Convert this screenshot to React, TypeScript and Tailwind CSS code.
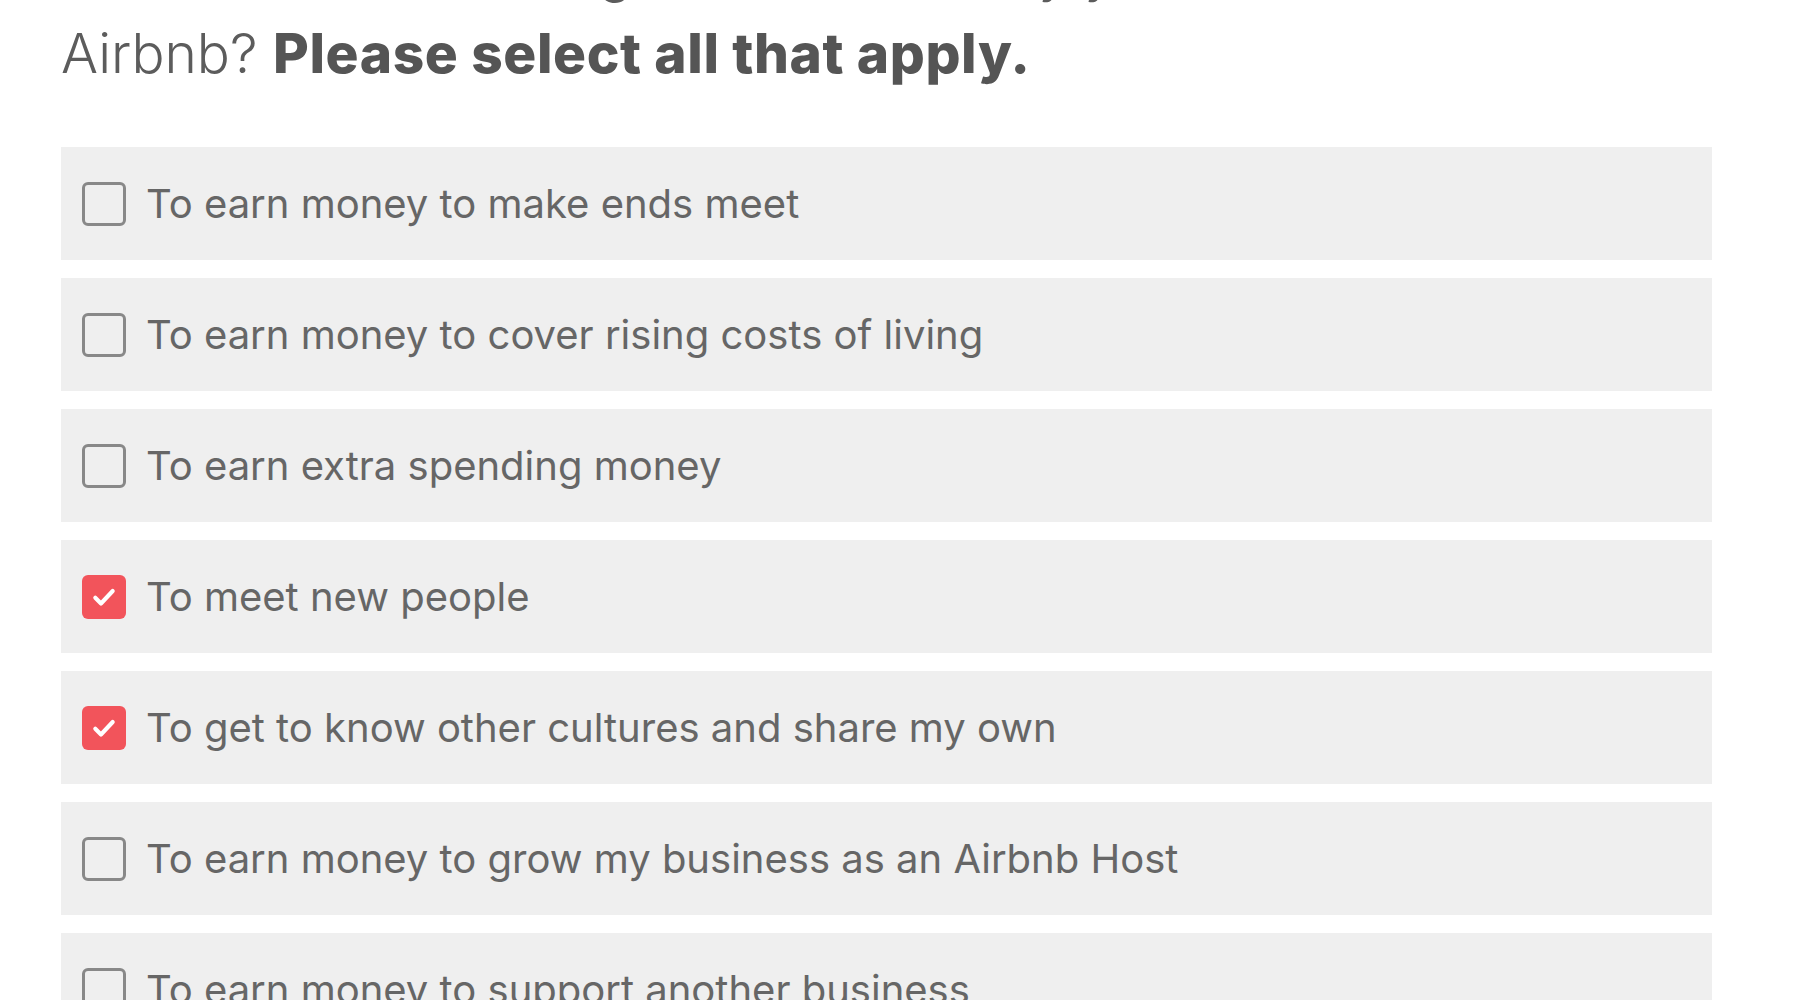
const options = [
  { label: "To earn money to make ends meet", checked: false },
  { label: "To earn money to cover rising costs of living", checked: false },
  { label: "To earn extra spending money", checked: false },
  { label: "To meet new people", checked: true },
  { label: "To get to know other cultures and share my own", checked: true },
  { label: "To earn money to grow my business as an Airbnb Host", checked: false },
  { label: "To earn money to support another business", checked: false },
];

function Box({ checked }: { checked: boolean }) {
  if (checked) {
    return (
      <span className="flex h-[44px] w-[44px] shrink-0 items-center justify-center rounded-[6px] bg-[#f2545b]">
        <svg viewBox="0 0 24 24" className="h-[38px] w-[38px]" fill="none">
          <path d="M6.5 12.5l3.6 3.6L17.5 8.2" stroke="white" strokeWidth="2.6" strokeLinecap="round" strokeLinejoin="round" />
        </svg>
      </span>
    );
  }
  return <span className="h-[44px] w-[44px] shrink-0 rounded-[6px] border-[3px] border-[#888]" />;
}

export default function App() {
  return (
    <div className="h-screen overflow-hidden bg-white px-[61px] font-['Inter',sans-serif] text-[#666]">
      <h1 className="-mt-[70px] whitespace-nowrap text-[55px] leading-[82px] font-light text-[#5c5c5c]">
        Which of the following are reasons why you host or want to host on
        <br />
        Airbnb? <span className="font-extrabold tracking-[0.6px] text-[#555]">Please select all that apply.</span>
      </h1>
      <div className="mt-[53px] flex w-[1651px] flex-col gap-[18px]">
        {options.map((o) => (
          <label key={o.label} className="flex h-[113px] items-center gap-[20px] bg-[#efefef] pl-[21px]">
            <Box checked={o.checked} />
            <span className="text-[40px] leading-none">{o.label}</span>
          </label>
        ))}
      </div>
    </div>
  );
}
